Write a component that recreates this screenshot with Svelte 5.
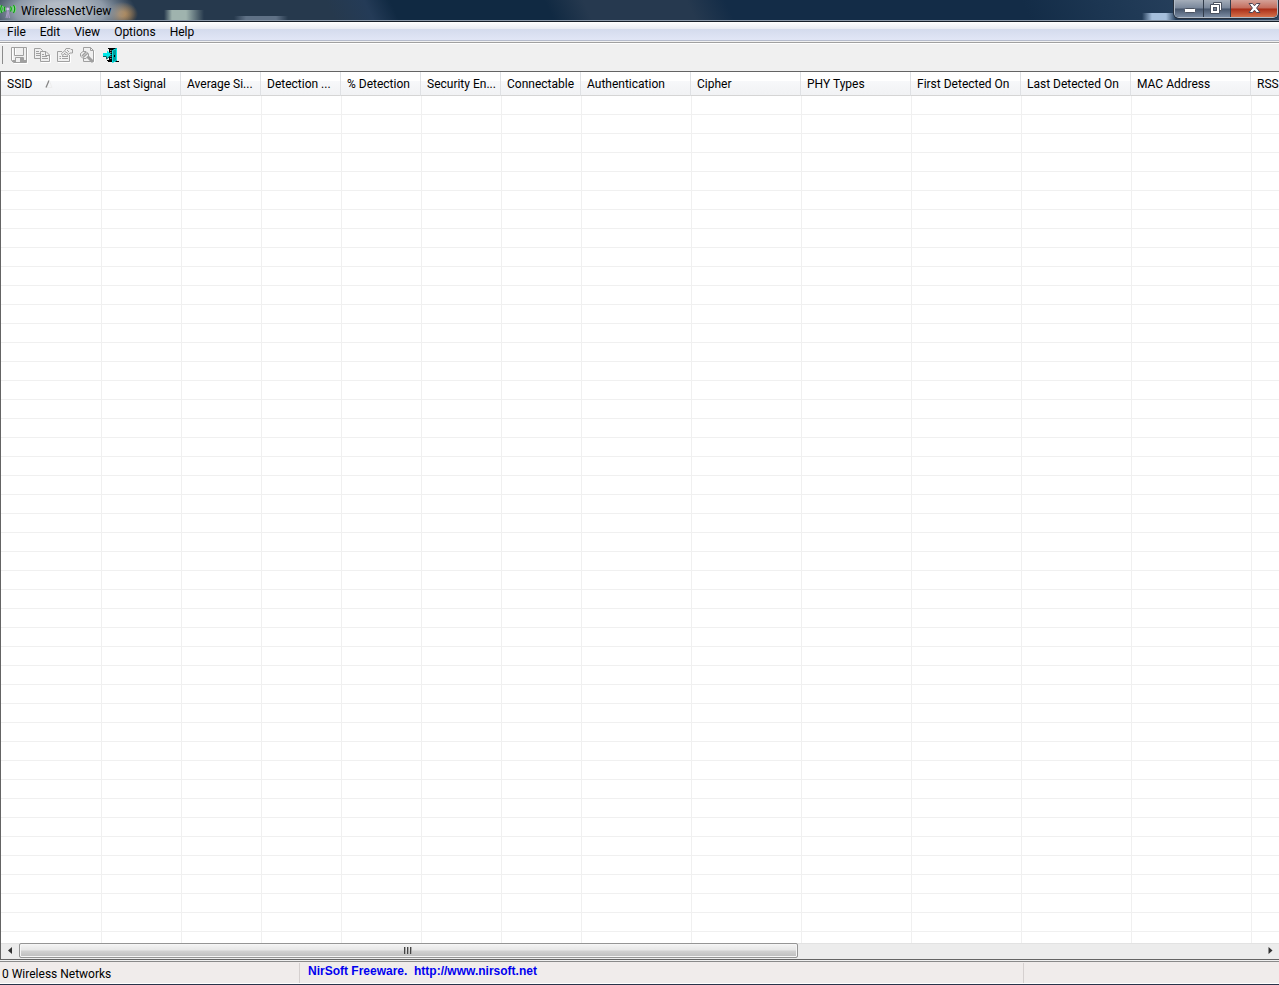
<script>
	const menus = ['File', 'Edit', 'View', 'Options', 'Help']

	const columns = [
		{ title: 'SSID', width: 100, sorted: true },
		{ title: 'Last Signal', width: 80 },
		{ title: 'Average Si...', width: 80 },
		{ title: 'Detection ...', width: 80 },
		{ title: '% Detection', width: 80 },
		{ title: 'Security En...', width: 80 },
		{ title: 'Connectable', width: 80 },
		{ title: 'Authentication', width: 110 },
		{ title: 'Cipher', width: 110 },
		{ title: 'PHY Types', width: 110 },
		{ title: 'First Detected On', width: 110 },
		{ title: 'Last Detected On', width: 110 },
		{ title: 'MAC Address', width: 120 },
		{ title: 'RSSI', width: 80 }
	]

	// Empty grid rows, enough to fill a tall window
	const rows = Array(80).fill(0)
	const tableWidth = columns.reduce((sum, c) => sum + c.width, 0)

	let networks = $state([])
</script>

<div class="window">
	<header class="titlebar">
		<svg class="app-icon" width="16" height="16" viewBox="0 0 16 16" aria-hidden="true">
			<g fill="none" stroke="#7df07a" stroke-width="2.600">
				<path d="M2 2.500Q-.5 5.500 2 9.500M5 4Q3.500 5.500 5 8M13.500 2.500Q16 5.500 13.500 9.500M10.500 4Q12 5.500 10.500 8" />
			</g>
			<g fill="none" stroke="#138a1a" stroke-width="1.200">
				<path d="M2 2Q-.5 5.500 2 10M5 3.500Q3.500 5.500 5 8.500M13.500 2Q16 5.500 13.500 10M10.500 3.500Q12 5.500 10.500 8.500" />
			</g>
			<path d="M7.800 6V15M6 15L7.500 8M9.600 15L8 8" stroke="#a89cc4" fill="none" />
			<circle cx="7.800" cy="6" r="1.800" fill="#d5c8ea" stroke="#776d9a" stroke-width=".5" />
		</svg>
		<h1>WirelessNetView</h1>
		<div class="controls">
			<button aria-label="Minimize">
				<svg width="28" height="17" viewBox="0 0 28 17"><rect x="9.500" y="8.500" width="11" height="4" rx="1" fill="#fff" stroke="#4b5361" /></svg>
			</button>
			<button aria-label="Restore">
				<svg width="26" height="17" viewBox="0 0 26 17">
					<path d="M9.500 2.500H17.500V10.500H9.500Z" fill="#fff" stroke="#4b5361" />
					<path d="M6.500 4.500H15.500V13.500H6.500Z" fill="#fff" stroke="#4b5361" />
					<rect x="9.500" y="7.500" width="3" height="3" fill="#748094" stroke="#4b5361" />
				</svg>
			</button>
			<button class="close" aria-label="Close">
				<svg width="46" height="17" viewBox="0 0 46 17">
					<path d="M18 3.500H21.500L23.500 5.800L25.500 3.500H29L25.600 8L29 12.500H25.500L23.500 10.200L21.500 12.500H18L21.400 8Z" fill="#fff" stroke="#4f4655" />
				</svg>
			</button>
		</div>
	</header>

	<nav class="menubar">
		{#each menus as menu}
			<button>{menu}</button>
		{/each}
	</nav>

	<div class="toolbar" role="toolbar" aria-label="Actions">
		<button aria-label="Save selected items" disabled>
			<svg width="17" height="17" viewBox="0 0 17 17">
				<path d="M.5 .5H15.500V15.500H2.500L.5 13.500ZM3.500 .5V8.500H12.500V.5M4.500 15V10.500H12.500V15" fill="none" stroke="#a0a0a0" />
				<path d="M9 11H12V15H9ZM1 13H4V15H2ZM13 13H15V15H13Z" fill="#a0a0a0" />
				<path d="M16.500 1V16.500H3M1.500 1V13M4.500 1V8" fill="none" stroke="#fff" />
			</svg>
		</button>
		<button aria-label="Copy" disabled>
			<svg width="17" height="17" viewBox="0 0 17 17">
				<g fill="#efefef" stroke="#a0a0a0">
					<path d="M.5 1.500H6.500L8.500 3.500V11.500H.5ZM2 4.500H5M2 6.500H6M2 8.500H6" />
					<path d="M6.500 4.500H12L15.500 8V14.500H6.500ZM11.500 4.500V8.500H15M8 7.500H10M8 9.500H13M8 11.500H14" />
				</g>
				<path d="M16.500 8V15.500H7" fill="none" stroke="#fff" />
			</svg>
		</button>
		<button aria-label="Properties" disabled>
			<svg width="17" height="17" viewBox="0 0 17 17">
				<path d="M5 4.500H.5V14.500H12.500V8M2.500 9.500H4M5 9.500H11M2.500 11.500H4M5 11.500H11" fill="none" stroke="#a0a0a0" />
				<path d="M4.500 6.500L8 3.500L9 1.500H13L14 2.500H15.500V6H13L10 8.500L8 6.500L5.500 8.500Z" fill="#efefef" stroke="#a0a0a0" />
				<path d="M8 4.500L11 6.500M7 6L9 8M10 3L12 5" stroke="#a0a0a0" />
				<path d="M13.500 8V15.500H1" fill="none" stroke="#fff" />
			</svg>
		</button>
		<button aria-label="Find" disabled>
			<svg width="17" height="17" viewBox="0 0 17 17">
				<path d="M3.500 4V.5H10.500L13.500 3.500V14.500H3.500V12M10.500 .5V3.500H13" fill="none" stroke="#a0a0a0" />
				<path d="M.5 6.500L3 4.500H6L8.500 7V9L6 11.500H3L.5 9Z" fill="#efefef" stroke="#a0a0a0" />
				<path d="M2 9L6 5M3 10.500L8 6" stroke="#a0a0a0" stroke-width="1.500" />
				<path d="M7.500 9.500L13 15" stroke="#a0a0a0" stroke-width="3" />
				<path d="M14.500 4V15.500" stroke="#fff" />
			</svg>
		</button>
		<button aria-label="Exit">
			<svg width="17" height="17" viewBox="0 0 17 17">
				<path d="M5 1H14V14H16V15H5V13H6V2H5Z" fill="#000" />
				<path d="M4 13H7V14H4Z" fill="#000" />
				<path d="M7.500 3V13M9 3V13" stroke="#8a8a8a" stroke-dasharray="1 1" />
				<path d="M9.500 3.500L13.500 1.500V13.500L9.500 15.500Z" fill="#009b9b" stroke="#00e5e5" />
				<path d="M11 8H12V10H11Z" fill="#000" />
				<path d="M0 6H4V3.500L8.500 7.500L4 11.500V9H0Z" fill="#00e8e8" />
				<path d="M0 9.500H3.500V12L8.500 8" stroke="#005c5c" fill="none" />
			</svg>
		</button>
	</div>

	<main>
		<div class="list">
			<table style="width: {tableWidth}px">
				<colgroup>
					{#each columns as column}
						<col style="width: {column.width}px" />
					{/each}
				</colgroup>
				<thead>
					<tr>
						{#each columns as column}
							<th scope="col" aria-sort={column.sorted ? 'ascending' : undefined}>
								{column.title}
								{#if column.sorted}
									<svg class="sort" width="8" height="8" viewBox="0 0 8 8" aria-hidden="true">
										<path d="M1 7.500L4 .5" stroke="#858585" stroke-width="1.300" />
										<path d="M4.500 1L7 7.500H2" stroke="#ededed" fill="none" />
									</svg>
								{/if}
							</th>
						{/each}
					</tr>
				</thead>
				<tbody>
					{#each rows as _}
						<tr>
							{#each columns as _}
								<td></td>
							{/each}
						</tr>
					{/each}
				</tbody>
			</table>
		</div>
		<div class="scrollbar">
			<button aria-label="Scroll left">
				<svg width="5" height="7" viewBox="0 0 5 7"><path d="M4 0V7L0 3.500Z" fill="#333" /></svg>
			</button>
			<div class="track">
				<div class="thumb"><i></i><i></i><i></i></div>
			</div>
			<button aria-label="Scroll right">
				<svg width="5" height="7" viewBox="0 0 5 7"><path d="M.5 0V7L4.500 3.500Z" fill="#333" /></svg>
			</button>
		</div>
	</main>

	<footer>
		<span class="count">{networks.length} Wireless Networks</span>
		<a href="http://www.nirsoft.net">NirSoft Freeware.&nbsp; http://www.nirsoft.net</a>
		<span class="spare"></span>
	</footer>
</div>

<style>
	:global(body) {
		margin: 0;
		overflow: hidden;
	}

	.window {
		display: flex;
		flex-direction: column;
		box-sizing: border-box;
		height: 100vh;
		border-bottom: 1px solid #29344a;
		background: #f0f0f0;
		color: #000;
		font-family: Roboto, 'Open Sans', sans-serif;
		font-size: 12px;
		line-height: 16px;
	}

	button {
		display: flex;
		align-items: center;
		justify-content: center;
		margin: 0;
		border: 0;
		padding: 0;
		background: none;
		color: inherit;
		font: inherit;
	}

	svg {
		display: block;
		flex: none;
	}

	.titlebar {
		display: flex;
		flex: none;
		align-items: flex-start;
		box-sizing: border-box;
		height: 22px;
		overflow: hidden;
		border-bottom: 1px solid #151d28;
		box-shadow: inset 0 -1px #8b98a8;
		background:
			radial-gradient(ellipse 76px 32px at 60px 11px, #b3bbc5 0 25%, #8e9aa8 60%, transparent 100%),
			radial-gradient(ellipse 16px 12px at 122px 14px, #b9823f 20%, transparent),
			linear-gradient(90deg, transparent 164px, #9fb3ae 172px 186px, transparent 204px) 0 10px no-repeat,
			linear-gradient(90deg, transparent 234px, #5f7186 246px 276px, transparent 288px) 0 16px no-repeat,
			linear-gradient(90deg, transparent 1142px, #a5bfdc 1152px 1166px, transparent 1176px) 0 13px no-repeat,
			linear-gradient(65deg, #26394d 0 26%, #243b57 29%, #102942 31% 43%, #26394f 46% 54%, #132c47 57% 80%, #1c3652 86%, #314a67);
	}

	.app-icon {
		margin-top: 3px;
	}

	h1 {
		flex: 1;
		margin: 3px 0 0 5px;
		font-size: 12px;
		font-weight: 400;
		line-height: 16px;
	}

	.controls {
		display: flex;
		margin-right: 1px;
		border: 1px solid #b1bbc7;
		border-top: 0;
		border-radius: 0 0 5px 5px;
		box-shadow: 0 0 0 1px #27303d;
		overflow: hidden;
	}

	.controls button {
		height: 17px;
		background: linear-gradient(#a4adb9, #78869a 48%, #45546a 52%, #7a8ba2);
	}

	.controls button + button {
		border-left: 1px solid #313b4a;
	}

	.controls .close {
		background: linear-gradient(#d4a197, #c46c5b 48%, #a92d17 52%, #d4704b);
	}

	.menubar {
		display: flex;
		flex: none;
		height: 18px;
		padding-left: 1px;
		border-bottom: 1px solid #b6bccc;
		background: linear-gradient(#fff, #e8ebf3 7px, #d4dbed 7px, #e1e6f6);
	}

	.menubar button {
		padding: 2px 8px 0 6px;
	}

	.toolbar {
		display: flex;
		flex: none;
		align-items: center;
		gap: 6px;
		height: 24px;
		margin-top: 1px;
		border-top: 1px solid #a0a0a0;
		padding: 0 0 4px 2px;
		box-shadow: inset 0 1px #fff;
	}

	.toolbar::before {
		content: '';
		width: 1px;
		height: 18px;
		margin-right: 2px;
		background: #8b8b8b;
	}

	main {
		display: flex;
		flex: 1;
		flex-direction: column;
		min-height: 0;
		border: 1px solid #646464;
		border-right: 0;
		background: #fff;
	}

	.list {
		flex: 1;
		min-height: 0;
		overflow: hidden;
	}

	table {
		border-collapse: separate;
		border-spacing: 0;
		table-layout: fixed;
	}

	th {
		box-sizing: border-box;
		height: 24px;
		border-right: 1px solid #dfe1e4;
		border-bottom: 1px solid #d5d5d5;
		padding: 0 0 0 6px;
		background: linear-gradient(#fff 9px, #f7f8fa 9px, #f1f2f4);
		font-weight: 400;
		text-align: left;
		white-space: nowrap;
	}

	.sort {
		display: inline-block;
		margin-left: 10px;
	}

	td {
		box-sizing: border-box;
		height: 19px;
		border-bottom: 1px solid #f0f0f0;
		border-left: 1px solid #f0f0f0;
		padding: 0;
	}

	td:first-child {
		border-left: 0;
	}

	.scrollbar {
		display: flex;
		flex: none;
		height: 16px;
		box-shadow: inset 0 1px #e2e2e2;
		background: #ececec;
	}

	.scrollbar button {
		width: 18px;
		padding-bottom: 2px;
	}

	.track {
		flex: 1;
	}

	.thumb {
		display: flex;
		align-items: center;
		justify-content: center;
		gap: 1px;
		box-sizing: border-box;
		width: 62.7%;
		height: 15px;
		border: 1px solid #959595;
		border-radius: 2px;
		box-shadow: inset 0 0 0 1px #f5f5f5;
		background: linear-gradient(#f4f4f4, #e6e6e6 48%, #d2d2d2 52%, #bdbdbd);
	}

	.thumb i {
		width: 2px;
		height: 7px;
		background: linear-gradient(90deg, #444 50%, #aaa 50%);
	}

	footer {
		display: flex;
		flex: none;
		height: 20px;
		margin-top: 1px;
		border-top: 1px solid #8a8a8a;
		border-bottom: 1px solid #fff;
		padding-top: 1px;
		background: #f0eceb;
	}

	.count {
		box-sizing: border-box;
		width: 300px;
		border-right: 1px solid #d5d0cf;
		padding: 3px 0 0 2px;
	}

	footer a {
		flex: 1;
		padding: 0 8px;
		color: #0000f0;
		font: bold 12px/16px 'Liberation Sans', Arial, sans-serif;
		text-decoration: none;
	}

	.spare {
		width: 255px;
		border-left: 1px solid #d5d0cf;
	}
</style>
